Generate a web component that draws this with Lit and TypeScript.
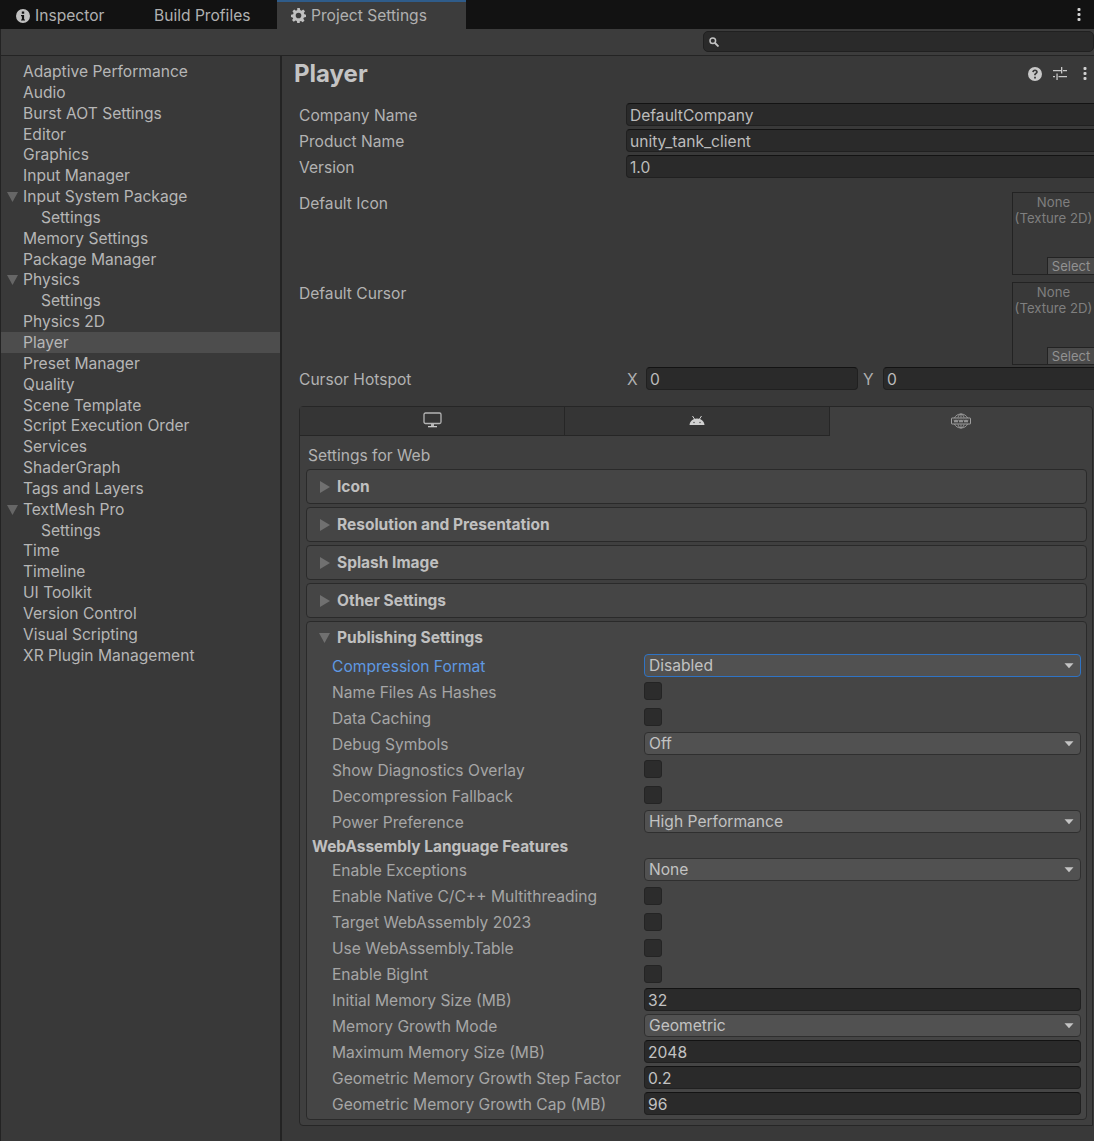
import { LitElement, html, css } from "lit";
import { customElement } from "lit/decorators.js";

const nav: [string, number, boolean?][] = [
  ["Adaptive Performance", 0], ["Audio", 0], ["Burst AOT Settings", 0], ["Editor", 0], ["Graphics", 0],
  ["Input Manager", 0], ["Input System Package", 0, true], ["Settings", 1], ["Memory Settings", 0],
  ["Package Manager", 0], ["Physics", 0, true], ["Settings", 1], ["Physics 2D", 0], ["Player", 0],
  ["Preset Manager", 0], ["Quality", 0], ["Scene Template", 0], ["Script Execution Order", 0], ["Services", 0],
  ["ShaderGraph", 0], ["Tags and Layers", 0], ["TextMesh Pro", 0, true], ["Settings", 1], ["Time", 0],
  ["Timeline", 0], ["UI Toolkit", 0], ["Version Control", 0], ["Visual Scripting", 0], ["XR Plugin Management", 0],
];

type Row = { l: string; t: "dd" | "cb" | "in" | "hd"; v?: string; focus?: boolean };
const rows: Row[] = [
  { l: "Compression Format", t: "dd", v: "Disabled", focus: true },
  { l: "Name Files As Hashes", t: "cb" },
  { l: "Data Caching", t: "cb" },
  { l: "Debug Symbols", t: "dd", v: "Off" },
  { l: "Show Diagnostics Overlay", t: "cb" },
  { l: "Decompression Fallback", t: "cb" },
  { l: "Power Preference", t: "dd", v: "High Performance" },
  { l: "WebAssembly Language Features", t: "hd" },
  { l: "Enable Exceptions", t: "dd", v: "None" },
  { l: "Enable Native C/C++ Multithreading", t: "cb" },
  { l: "Target WebAssembly 2023", t: "cb" },
  { l: "Use WebAssembly.Table", t: "cb" },
  { l: "Enable BigInt", t: "cb" },
  { l: "Initial Memory Size (MB)", t: "in", v: "32" },
  { l: "Memory Growth Mode", t: "dd", v: "Geometric" },
  { l: "Maximum Memory Size (MB)", t: "in", v: "2048" },
  { l: "Geometric Memory Growth Step Factor", t: "in", v: "0.2" },
  { l: "Geometric Memory Growth Cap (MB)", t: "in", v: "96" },
];

const kebab = html`<svg class="kebab" width="4" height="13" viewBox="0 0 4 13"><rect x="0.500" y="0" width="3" height="3" rx="1" /><rect x="0.500" y="5" width="3" height="3" rx="1" /><rect x="0.500" y="10" width="3" height="3" rx="1" /></svg>`;
const triDown = html`<svg class="tri" width="11" height="10" viewBox="0 0 11 10"><path d="M0 0h11L5.500 10z" /></svg>`;
const triRight = html`<svg class="tri" width="10" height="12" viewBox="0 0 10 12"><path d="M0 0v12l10-6z" /></svg>`;
const ddArrow = html`<svg class="arrow" width="10" height="7" viewBox="0 0 10 7"><path d="M0.500 1.200h9L5 6.200z" /></svg>`;

const objectField = html`<div class="objfield"><div class="objtext">None<br />(Texture 2D)</div><div class="sel">Select</div></div>`;

@customElement("app-root")
export class AppRoot extends LitElement {
  static styles = css`
    :host { display: block; width: 1094px; height: 1141px; overflow: hidden; background: #393939; color: #bdbdbd; font: 15.6px/20px Inter, "Noto Sans", sans-serif; }
    * { box-sizing: border-box; }
    .tabbar { height: 29px; background: #121212; display: flex; position: relative; }
    .tab { height: 29px; display: flex; align-items: center; color: #b0b0b0; white-space: nowrap; padding-top: 2px; }
    .tab.t1 { width: 154px; padding-left: 16px; gap: 5px; }
    .tab.t2 { width: 123px; }
    .tab.t3 { width: 189px; padding-left: 14px; gap: 5px; background: #3c3c3c; border-top: 2px solid #2f5c8a; padding-top: 0; }
    .tab svg { fill: #c0c0c0; flex: none; }
    .tabmenu { margin-left: auto; margin-right: 13px; display: flex; align-items: center; }
    .kebab { fill: #d2d2d2; display: block; }
    .window { border-left: 1px solid #232323; height: 1112px; }
    .toolbar { height: 27px; background: #3c3c3c; border-bottom: 1px solid #242424; display: flex; justify-content: flex-end; align-items: center; padding-bottom: 1px; }
    .search { width: 391px; height: 21px; background: #2a2a2a; border: 1px solid #202020; border-radius: 5px; display: flex; align-items: center; padding-left: 5px; }
    .search svg { stroke: #c4c4c4; fill: none; }
    .split { display: flex; height: 1085px; }
    .side { width: 279px; flex: none; padding-top: 5px; background: #393939; }
    .nav { height: 20.857px; line-height: 22.857px; padding-left: 22px; position: relative; white-space: nowrap; color: #b6b6b6; }
    .nav.child { padding-left: 40px; }
    .nav.active { background: #4d4d4d; }
    .nav .tri { position: absolute; left: 6px; top: 6px; fill: #666; }
    .divider { width: 2px; flex: none; background: #232323; }
    .main { flex: 1; min-width: 0; background: #393939; position: relative; }
    .head { height: 46px; display: flex; align-items: center; padding: 0 7px 11px 12px; }
    .head h1 { margin: 0; font-size: 24px; font-weight: 700; color: #c4c4c4; flex: 1; line-height: 35px; }
    .head .icons { display: flex; align-items: center; gap: 11px; }
    .head .icons svg.h { fill: #c8c8c8; display: block; }
    .kwrap { margin-left: 5px; }
    .form { padding-left: 17px; }
    .frow { display: grid; grid-template-columns: 327px 1fr; height: 26px; align-items: center; color: #b2b2b2; }
    .frow > div:first-child { padding-top: 2px; }
    .field { height: 23px; margin-bottom: 2px; background: #2a2a2a; border: 1px solid #202020; border-top-color: #131313; border-radius: 4px; padding: 0 3px; line-height: 23px; color: #bcbcbc; white-space: nowrap; overflow: hidden; }
    .frow .field { border-right: 0; border-radius: 4px 0 0 4px; }
    .imgrow { display: flex; justify-content: space-between; align-items: flex-start; color: #b2b2b2; height: 90px; padding-top: 1px; }
    .imgrow .lab { padding-top: 2px; }
    .objfield { width: 82px; height: 83px; flex: none; background: #393939; border: 1px solid #232323; border-right: 0; position: relative; font-size: 13.2px; line-height: 16px; text-align: center; color: #7f7f7f; padding-top: 1px; }
    .objtext { white-space: nowrap; }
    .sel { position: absolute; right: 0; bottom: 0; width: 47px; height: 17px; line-height: 16px; background: #4b4b4b; border: 1px solid #232323; border-width: 1px 0 0 1px; color: #929292; font-size: 13px; }
    .imgs { height: 175px; margin-top: 11px; }
    .hot { display: grid; grid-template-columns: 328px 19px 212px 25px 1fr; height: 26px; align-items: center; color: #b2b2b2; }
    .hot .cap { white-space: nowrap; padding-top: 2px; }
    .hot .ax { color: #b0b0b0; padding-top: 2px; }
    .hot .ax.y { padding-left: 5px; }
    .hot .f2 { border-right: 0; border-radius: 4px 0 0 4px; }
    .panel { margin-top: 14px; width: 794px; height: 720px; background: #3f3f3f; border: 1px solid #262626; border-radius: 4px 4px 0 4px; }
    .ptabs { display: flex; height: 29px; }
    .ptab { width: 265px; flex: none; height: 29px; padding-bottom: 2px; background: #353535; border-right: 1px solid #262626; border-bottom: 1px solid #262626; display: flex; align-items: center; justify-content: center; }
    .ptab.active { flex: 1; background: transparent; border: 0; }
    .ptab svg { display: block; }
    .forweb { padding: 9px 0 0 8px; height: 33px; line-height: 22px; color: #b2b2b2; }
    .section { margin: 0 5px 3px 6px; height: 35px; background: #454545; border: 1px solid #2a2a2a; border-radius: 4px; display: flex; align-items: center; padding-left: 13px; font-size: 15.5px; font-weight: 700; color: #c0c0c0; gap: 7px; padding-top: 1px; }
    .section .tri { fill: #707070; }
    .section.open { height: 499px; display: block; padding: 0; margin-bottom: 0; }
    .pubhead { height: 31px; display: flex; align-items: center; padding: 0 0 0 12px; gap: 7px; }
    .row { display: grid; grid-template-columns: 312px 1fr; height: 26px; align-items: center; padding: 0 5px 0 25px; font-size: 15.6px; font-weight: 400; color: #a6a6a6; white-space: nowrap; }
    .lbl { padding-top: 2px; }
    .row.focus .lbl { color: #5f99e2; }
    .row.hd { height: 22px; padding-left: 5px; display: block; font-size: 15.4px; font-weight: 700; color: #c0c0c0; line-height: 24px; }
    .dd { height: 23px; margin-bottom: 2px; padding: 2px 6px 0 4px; background: #515151; border: 1px solid #2f2f2f; border-radius: 4px; display: flex; align-items: center; justify-content: space-between; color: #c2c2c2; }
    .dd.focus { border-color: #2f73c4; }
    .arrow { fill: #c4c4c4; margin-top: -2px; }
    .cb { width: 18px; height: 18px; margin-bottom: 2px; background: #2c2c2c; border: 1px solid #242424; border-radius: 3px; }
    .hd ~ .row .cb { margin-bottom: 0; }
    .inp { height: 23px; margin-bottom: 2px; background: #2a2a2a; border: 1px solid #202020; border-top-color: #131313; border-radius: 4px; padding-left: 3px; line-height: 23px; color: #c2c2c2; }
  `;

  renderRow(r: Row) {
    if (r.t === "hd") return html`<div class="row hd">${r.l}</div>`;
    return html`<div class="row ${r.focus ? "focus" : ""}">
      <div class="lbl">${r.l}</div>
      ${r.t === "dd"
        ? html`<div class="dd ${r.focus ? "focus" : ""}"><span>${r.v}</span>${ddArrow}</div>`
        : r.t === "cb"
        ? html`<div class="cb"></div>`
        : html`<div class="inp">${r.v}</div>`}
    </div>`;
  }

  render() {
    return html`
      <div class="tabbar">
        <div class="tab t1">
          <svg width="14" height="14" viewBox="0 0 14 14"><path fill-rule="evenodd" d="M7 0a7 7 0 1 1 0 14A7 7 0 0 1 7 0zM5.800 2.600v2.200h2.400V2.600zM5 6v1.300h.9v3.100H5v1.200h4v-1.200h-.9V6z" /></svg>
          <span>Inspector</span>
        </div>
        <div class="tab t2">Build Profiles</div>
        <div class="tab t3">
          <svg width="15" height="15" viewBox="0 0 24 24"><path fill-rule="evenodd" d="M10 0h4l.7 3.300 2 .9L19.600 2.300l2.800 2.800-1.900 2.900.9 2L24 10.700v3.600l-3.400.7-.9 2 1.900 2.800-2.800 2.800-2.900-1.900-2 .8L14 24h-4l-.7-3.300-2-.8-2.900 1.900-2.800-2.800L3.500 17l-.9-2L0 14.300v-3.600l3.300-.7.9-2-1.900-2.900L5.100 2.300 8 4.200l2-.9zM12 7.500a4.500 4.500 0 1 0 0 9 4.500 4.500 0 0 0 0-9z" /></svg>
          <span>Project Settings</span>
        </div>
        <div class="tabmenu">${kebab}</div>
      </div>
      <div class="window">
        <div class="toolbar">
          <div class="search">
            <svg width="10" height="10" viewBox="0 0 10 10"><circle cx="3.800" cy="3.800" r="2.800" stroke-width="1.500" /><path d="M6 6l3.500 3.500" stroke-width="1.800" /></svg>
          </div>
        </div>
        <div class="split">
          <div class="side">
            ${nav.map(([t, lvl, open]) => html`<div class="nav ${lvl ? "child" : ""} ${t === "Player" ? "active" : ""}">${open ? triDown : ""}${t}</div>`)}
          </div>
          <div class="divider"></div>
          <div class="main">
            <div class="head">
              <h1>Player</h1>
              <div class="icons">
                <svg class="h" width="14" height="14" viewBox="0 0 14 14"><path fill-rule="evenodd" d="M7 0a7 7 0 1 1 0 14A7 7 0 0 1 7 0zM7 2.500C5.400 2.500 4.300 3.400 4.200 5l1.700.2c.1-.7.500-1.100 1.100-1.100.6 0 1 .3 1 .8 0 .4-.2.7-.8 1.100-.8.500-1.100 1-1.100 1.900v.4h1.700v-.3c0-.5.2-.7.800-1.100.8-.6 1.200-1.200 1.200-2C9.800 3.400 8.700 2.500 7 2.500zM6.100 9.700v1.800h1.800V9.700z" /></svg>
                <svg class="h" width="14" height="13" viewBox="0 0 14 13"><path d="M0 3h8v1.200H0zM10 3h4v1.200h-4zM8 0h1.300v6.500H8zM0 9h2v1.200H0zM5.500 9H14v1.200H5.500zM3.400 6.500h1.300V13H3.400z" /></svg>
                <div class="kwrap">${kebab}</div>
              </div>
            </div>
            <div class="form">
              <div class="frow"><div>Company Name</div><div class="field">DefaultCompany</div></div>
              <div class="frow"><div>Product Name</div><div class="field">unity_tank_client</div></div>
              <div class="frow"><div>Version</div><div class="field">1.0</div></div>
              <div class="imgs">
                <div class="imgrow"><div class="lab">Default Icon</div>${objectField}</div>
                <div class="imgrow"><div class="lab">Default Cursor</div>${objectField}</div>
              </div>
              <div class="hot">
                <div class="cap">Cursor Hotspot</div>
                <div class="ax">X</div><div class="field">0</div>
                <div class="ax y">Y</div><div class="field f2">0</div>
              </div>
              <div class="panel">
                <div class="ptabs">
                  <div class="ptab">
                    <svg width="19" height="16" viewBox="0 0 19 16" fill="none"><rect x="1" y="1" width="17" height="10.500" rx="1.500" stroke="#b4b4b4" stroke-width="1.300" /><path d="M8 12h3v2H8z" fill="#b4b4b4" /><path d="M5 14h9v1.300H5z" fill="#c8c8c8" /></svg>
                  </div>
                  <div class="ptab">
                    <svg width="16" height="11" viewBox="0 0 16 11"><path d="M0.500 10C.8 6.500 3.500 3.500 8 3.500s7.200 3 7.500 6.500z" fill="#d0d0d0" /><path d="M3.500 1L5.500 4M12.500 1L10.500 4" stroke="#d0d0d0" stroke-width="1" /><circle cx="5" cy="7.500" r=".7" fill="#444" /><circle cx="11" cy="7.500" r=".7" fill="#444" /></svg>
                  </div>
                  <div class="ptab active">
                    <svg width="20" height="16" viewBox="0 0 20 16" fill="none" stroke="#a6a6a6" stroke-width=".8"><path d="M3.500 5C4.500 2.500 7 1 10 1s5.500 1.500 6.500 4M3.500 11c1 2.500 3.500 4 6.500 4s5.500-1.500 6.500-4M7 4.500C7.500 2.500 8.700 1 10 1s2.500 1.500 3 3.500M7 11.500c.5 2 1.700 3.500 3 3.500s2.500-1.500 3-3.500M10 1v3.500M10 11.500V15" /><rect x="0.500" y="5" width="19" height="6" rx=".5" stroke="#b8b8b8" /><path d="M3 6.800l1 2.500 1-2.500 1 2.500 1-2.500M8 6.800l1 2.500 1-2.500 1 2.500 1-2.500M13 6.800l1 2.500 1-2.500 1 2.500 1-2.500" stroke="#c4c4c4" stroke-width=".7" /></svg>
                  </div>
                </div>
                <div class="forweb">Settings for Web</div>
                ${["Icon", "Resolution and Presentation", "Splash Image", "Other Settings"].map((s) => html`<div class="section">${triRight}<span>${s}</span></div>`)}
                <div class="section open">
                  <div class="pubhead">${triDown}<span>Publishing Settings</span></div>
                  ${rows.map((r) => this.renderRow(r))}
                </div>
              </div>
            </div>
          </div>
        </div>
      </div>
    `;
  }
}
